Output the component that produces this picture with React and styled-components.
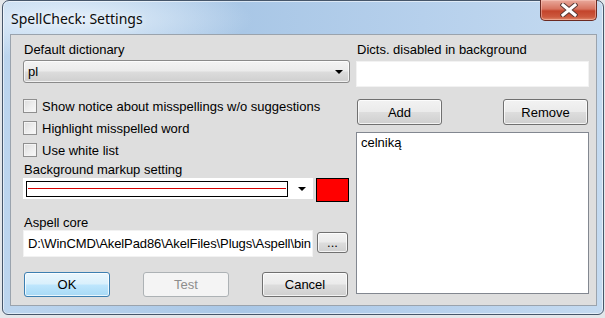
import React from "react";
import styled, { createGlobalStyle } from "styled-components";

const GlobalStyle = createGlobalStyle`
  html, body {
    margin: 0;
    padding: 0;
  }
  body {
    width: 605px;
    height: 318px;
    overflow: hidden;
    background: #e4e7ea;
    font-family: "Liberation Sans", Arial, sans-serif;
    font-size: 13px;
    color: #000;
  }
`;

const Desktop = styled.div`
  width: 605px;
  height: 318px;
  padding-left: 2px;
  box-sizing: border-box;
`;

const Window = styled.div`
  width: 602px;
  height: 315px;
  box-sizing: border-box;
  border: 1px solid #46566a;
  border-radius: 7px 7px 6px 6px;
  background:
    radial-gradient(ellipse 180px 40px at 70px 18px, rgba(235, 244, 252, 0.85), rgba(235, 244, 252, 0) 100%),
    linear-gradient(90deg, #bcd5ee 0%, #a9c7e6 40%, #b6d0ec 70%, #c4daf0 100%);
  box-shadow: inset 0 0 0 1px rgba(255, 255, 255, 0.55);
  padding: 0 6px 8px 7px;
  display: flex;
  flex-direction: column;
`;

const TitleBar = styled.div`
  height: 33px;
  display: flex;
  justify-content: space-between;
  align-items: flex-start;
`;

const Title = styled.div`
  margin: 9px 0 0 1px;
  font-family: "Noto Sans", "Open Sans", sans-serif;
  font-size: 14px;
  line-height: 18px;
  color: #0b0b0b;
  text-shadow: 0 0 6px rgba(255, 255, 255, 0.9);
`;

const CloseButton = styled.div`
  width: 57px;
  height: 21px;
  margin: -1px 0 0 0;
  box-sizing: border-box;
  border: 1px solid #6b2a22;
  border-top: none;
  border-radius: 0 0 5px 5px;
  background: linear-gradient(180deg, #e9a99c 0%, #d7735f 45%, #c3442b 55%, #cc5a3f 85%, #e08a6c 100%);
  box-shadow: inset 0 0 0 1px rgba(255, 210, 200, 0.45);
  display: flex;
  align-items: center;
  justify-content: center;
`;

const Client = styled.div`
  flex: 1;
  box-sizing: border-box;
  border: 1px solid #9aa3ad;
  background: #dedede;
  padding: 0 7px 0 12px;
  display: flex;
  gap: 6px;
`;

const Column = styled.div`
  width: ${(p) => p.$width}px;
  display: flex;
  flex-direction: column;
`;

const Label = styled.div`
  height: 14px;
  line-height: 14px;
  margin-top: ${(p) => p.$mt || 0}px;
  padding-left: 1px;
  white-space: nowrap;
`;

const Combo = styled.div`
  margin-top: 3px;
  height: 23px;
  box-sizing: border-box;
  border: 1px solid #8a8a8a;
  border-radius: 3px;
  background: linear-gradient(180deg, #f3f3f3 0%, #ebebeb 48%, #dcdcdc 52%, #cfcfcf 100%);
  box-shadow: inset 0 0 0 1px rgba(255, 255, 255, 0.7);
  display: flex;
  align-items: center;
  justify-content: space-between;
  padding: 0 6px 0 4px;
`;

const Arrow = styled.span`
  width: 0;
  height: 0;
  border-left: 4px solid transparent;
  border-right: 4px solid transparent;
  border-top: 4px solid #000;
`;

const CheckRow = styled.label`
  height: 22px;
  display: flex;
  align-items: center;
  margin-top: ${(p) => p.$mt || 0}px;
  white-space: nowrap;
`;

const Box = styled.span`
  width: 14px;
  height: 14px;
  box-sizing: border-box;
  border: 1px solid #8f8f8f;
  background: linear-gradient(135deg, #dcdcdc 0%, #eeeeee 55%, #f9f9f9 100%);
  box-shadow: inset 0 0 0 1px #f4f4f4;
  margin-right: 5px;
  flex-shrink: 0;
`;

const Row = styled.div`
  display: flex;
  align-items: flex-start;
  margin-top: ${(p) => p.$mt || 0}px;
`;

const MarkupCombo = styled.div`
  width: 290px;
  height: 21px;
  box-sizing: border-box;
  background: #fff;
  display: flex;
  align-items: center;
  padding: 0 7px 0 3px;
  gap: 10px;
`;

const LineSample = styled.div`
  flex: 1;
  height: 16px;
  box-sizing: border-box;
  border: 1px solid #000;
  padding: 0 1px;
  display: flex;
  align-items: center;

  &::after {
    content: "";
    flex: 1;
    height: 1px;
    background: #d40000;
  }
`;

const Swatch = styled.div`
  width: 33px;
  height: 24px;
  margin-left: 3px;
  box-sizing: border-box;
  border: 1px solid #000;
  background: #ff0000;
`;

const Edit = styled.div`
  width: ${(p) => (p.$width ? `${p.$width}px` : "auto")};
  height: ${(p) => p.$height}px;
  margin-top: ${(p) => p.$mt || 0}px;
  box-sizing: border-box;
  background: #fff;
  border: 1px solid #f2f2f2;
  padding: 0 4px;
  display: flex;
  align-items: center;
  overflow: hidden;
  white-space: nowrap;
  letter-spacing: -0.1px;
`;

const Button = styled.div`
  width: ${(p) => p.$width}px;
  height: ${(p) => p.$height}px;
  margin-top: ${(p) => p.$mt || 0}px;
  margin-left: ${(p) => p.$ml || 0}px;
  box-sizing: border-box;
  border: 1px solid ${(p) => (p.$default ? "#3c7fb1" : p.$disabled ? "#adb2b5" : "#707070")};
  border-radius: 3px;
  background: ${(p) =>
    p.$default
      ? "linear-gradient(180deg, #eaf6fd 0%, #d9f0fc 48%, #bee6fd 52%, #a7d9f5 100%)"
      : p.$disabled
      ? "#f4f4f4"
      : "linear-gradient(180deg, #f2f2f2 0%, #ebebeb 48%, #dddddd 52%, #cfcfcf 100%)"};
  box-shadow: inset 0 0 0 1px ${(p) => (p.$disabled ? "rgba(255,255,255,0)" : "rgba(255,255,255,0.75)")};
  color: ${(p) => (p.$disabled ? "#8d8d8d" : "#000")};
  display: flex;
  align-items: center;
  justify-content: center;
  flex-shrink: 0;
`;

const ButtonRow = styled.div`
  display: flex;
  justify-content: space-between;
  margin-top: ${(p) => p.$mt || 0}px;
  padding: 0 ${(p) => p.$pr || 0}px 0 1px;
`;

const ListBox = styled.div`
  margin-top: 7px;
  height: 162px;
  box-sizing: border-box;
  border: 1px solid #828790;
  background: #fff;
  padding: 2px 4px;
  line-height: 16px;
`;

const CloseGlyph = () => (
  <svg width="18" height="14" viewBox="0 0 18 14">
    <path
      d="M3 2 L15 12 M15 2 L3 12"
      stroke="#5a3a36"
      strokeWidth="5"
      strokeLinecap="square"
    />
    <path
      d="M3 2 L15 12 M15 2 L3 12"
      stroke="#fff"
      strokeWidth="3"
      strokeLinecap="square"
    />
  </svg>
);

const App = () => {
  return (
    <>
      <GlobalStyle />
      <Desktop>
        <Window>
          <TitleBar>
            <Title>SpellCheck: Settings</Title>
            <CloseButton>
              <CloseGlyph />
            </CloseButton>
          </TitleBar>

          <Client>
            <Column $width={327}>
              <Label $mt={8}>Default dictionary</Label>
              <Combo>
                <span>pl</span>
                <Arrow />
              </Combo>

              <CheckRow $mt={12}>
                <Box />
                Show notice about misspellings w/o suggestions
              </CheckRow>
              <CheckRow>
                <Box />
                Highlight misspelled word
              </CheckRow>
              <CheckRow>
                <Box />
                Use white list
              </CheckRow>

              <Label $mt={2}>Background markup setting</Label>
              <Row $mt={1}>
                <MarkupCombo>
                  <LineSample />
                  <Arrow />
                </MarkupCombo>
                <Swatch />
              </Row>

              <Label $mt={14}>Aspell core</Label>
              <Row>
                <Edit $width={290} $height={27}>
                  D:\WinCMD\AkelPad86\AkelFiles\Plugs\Aspell\bin
                </Edit>
                <Button $width={31} $height={21} $mt={2} $ml={4}>
                  ...
                </Button>
              </Row>

              <ButtonRow $mt={15} $pr={2}>
                <Button $width={86} $height={25} $default>
                  OK
                </Button>
                <Button $width={86} $height={25} $disabled>
                  Test
                </Button>
                <Button $width={86} $height={25}>
                  Cancel
                </Button>
              </ButtonRow>
            </Column>

            <Column $width={233}>
              <Label $mt={8}>Dicts. disabled in background</Label>
              <Edit $height={26} $mt={4} />
              <ButtonRow $mt={12} $pr={1}>
                <Button $width={85} $height={26}>
                  Add
                </Button>
                <Button $width={85} $height={26}>
                  Remove
                </Button>
              </ButtonRow>
              <ListBox>celniką</ListBox>
            </Column>
          </Client>
        </Window>
      </Desktop>
    </>
  );
};

export default App;
